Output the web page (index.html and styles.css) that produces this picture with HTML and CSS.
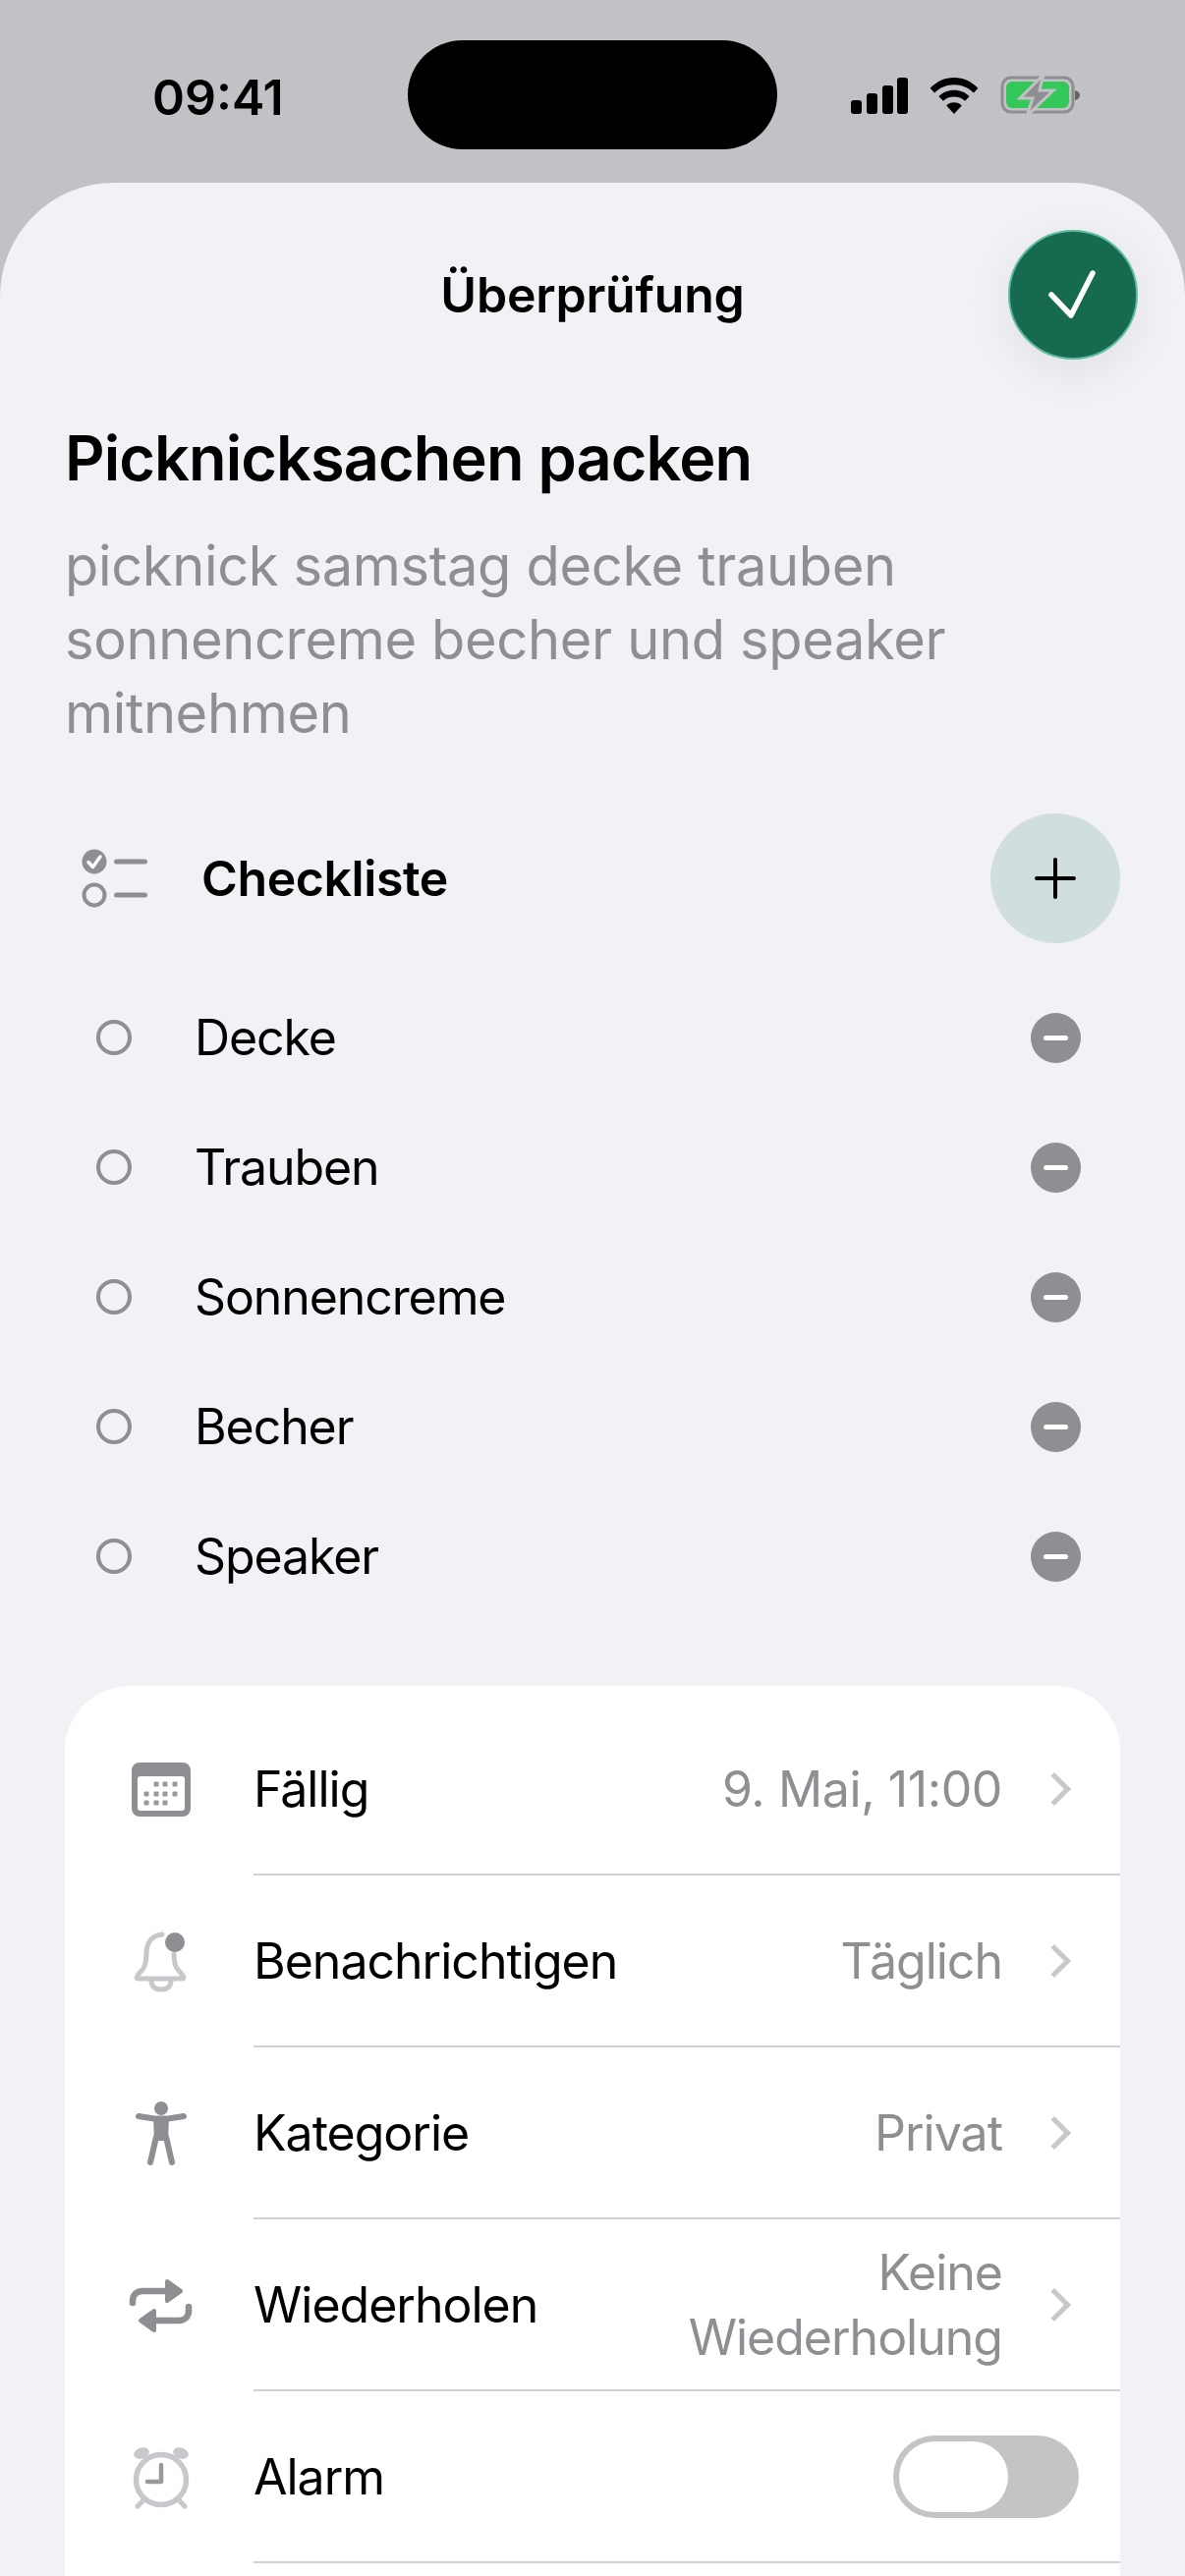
FILE: index.html
```html
<!DOCTYPE html>
<html lang="de">
<head>
    <meta charset="UTF-8">
    <meta name="viewport" content="width=device-width, initial-scale=1.0">
    <title>Überprüfung</title>
    <link rel="stylesheet" href="styles.css">
</head>
<body>
    <div class="phone">
        <div class="status-bar">
            <span class="time">09:41</span>
            <div class="island"></div>
            <div class="status-icons">
                <svg width="58" height="37" viewBox="0 0 58 37"><rect x="0" y="23" width="11" height="14" rx="3"/><rect x="16" y="16" width="11" height="21" rx="3"/><rect x="32" y="8" width="11" height="29" rx="3"/><rect x="47" y="0" width="11" height="37" rx="3"/></svg>
                <svg width="50" height="37" viewBox="0 0 50 38"><path d="M25 0C15 0 7 4 0 11l4.500 5C10 10.500 17 7.500 25 7.500S40 10.500 45.500 16l4.500-5C43 4 35 0 25 0z"/><path d="M25 13c-6.500 0-12 2.500-16 6.500l4.500 5c3-3 7-4.500 11.500-4.500s8.500 1.500 11.500 4.500l4.500-5C37 15.500 31.500 13 25 13z"/><path d="M25 26c-3.200 0-6 1.200-8 3.200L25 38l8-8.800C31 27.200 28.200 26 25 26z"/></svg>
                <svg width="82" height="42" viewBox="0 0 82 42"><rect x="2" y="3" width="72" height="35" rx="9" fill="none" stroke="#8e8e93" stroke-width="3"/><rect x="6" y="7" width="64" height="27" rx="6" fill="#34c759"/><path d="M76 16c3 .5 5 2.500 5 5s-2 4.500-5 5z" fill="#636366"/><path d="M44 0L20 24h13l-6 18 27-26H40z" fill="#8e8e93" stroke="#c2c1c6" stroke-width="3"/></svg>
            </div>
        </div>

        <div class="sheet">
            <div class="sheet-header">
                <h1>Überprüfung</h1>
                <button class="done-btn">
                    <svg width="60" height="60" viewBox="0 0 60 60"><path d="M8 30l20 21L50 8" fill="none" stroke="#fff" stroke-width="5.500" stroke-linecap="round" stroke-linejoin="round"/></svg>
                </button>
            </div>

            <h2 class="task-title">Picknicksachen packen</h2>
            <p class="task-note">picknick samstag decke trauben sonnencreme becher und speaker mitnehmen</p>

            <div class="check-head">
                <svg class="check-icon" width="68" height="60" viewBox="0 0 68 60">
                    <circle cx="13" cy="13" r="12.500" fill="#8e8e93"/>
                    <path d="M7 13.500l4.500 5L19 8" fill="none" stroke="#fff" stroke-width="3.500" stroke-linecap="round" stroke-linejoin="round"/>
                    <circle cx="13" cy="47" r="10.500" fill="none" stroke="#8e8e93" stroke-width="4"/>
                    <rect x="33" y="10.500" width="34" height="5" rx="2.500" fill="#8e8e93"/>
                    <rect x="33" y="44.500" width="34" height="5" rx="2.500" fill="#8e8e93"/>
                </svg>
                <span class="check-title">Checkliste</span>
                <button class="add-btn">
                    <svg width="42" height="42" viewBox="0 0 42 42"><path d="M21 2v38M2 21h38" stroke="#000" stroke-width="4" stroke-linecap="round"/></svg>
                </button>
            </div>

            <ul class="check-list">
                <li class="check-item"><span class="radio"></span><span class="check-name">Decke</span><span class="remove"></span></li>
                <li class="check-item"><span class="radio"></span><span class="check-name">Trauben</span><span class="remove"></span></li>
                <li class="check-item"><span class="radio"></span><span class="check-name">Sonnencreme</span><span class="remove"></span></li>
                <li class="check-item"><span class="radio"></span><span class="check-name">Becher</span><span class="remove"></span></li>
                <li class="check-item"><span class="radio"></span><span class="check-name">Speaker</span><span class="remove"></span></li>
            </ul>

            <div class="card">
                <div class="row">
                    <div class="row-icon">
                        <svg width="60" height="55" viewBox="0 0 60 55">
                            <rect width="60" height="55" rx="8" fill="#8e8e93"/>
                            <rect x="6" y="14" width="48" height="35" rx="3" fill="#fff"/>
                            <g fill="#98989d">
                                <rect x="22.500" y="19.500" width="5" height="5" rx="1"/><rect x="31.500" y="19.500" width="5" height="5" rx="1"/><rect x="41.500" y="19.500" width="5" height="5" rx="1"/>
                                <rect x="12.500" y="29.500" width="5" height="5" rx="1"/><rect x="22.500" y="29.500" width="5" height="5" rx="1"/><rect x="31.500" y="29.500" width="5" height="5" rx="1"/><rect x="41.500" y="29.500" width="5" height="5" rx="1"/>
                                <rect x="12.500" y="38.500" width="5" height="5" rx="1"/><rect x="22.500" y="38.500" width="5" height="5" rx="1"/><rect x="31.500" y="38.500" width="5" height="5" rx="1"/>
                            </g>
                        </svg>
                    </div>
                    <div class="row-body"><span class="row-label">Fällig</span><span class="row-value row-value-date">9. Mai, 11:00</span><span class="chevron"></span></div>
                </div>
                <div class="row">
                    <div class="row-icon">
                        <svg width="60" height="62" viewBox="0 0 60 62">
                            <path d="M31 3C20 4 15 12 15 23c0 9-2 14-5 17-3 3-5 5-5 7 0 1 1 1 3 1h42c2 0 3 0 3-1 0-2-2-4-5-7-3-3-5-8-5-17" fill="none" stroke="#c7c7cc" stroke-width="5" stroke-linecap="round" stroke-linejoin="round"/>
                            <path d="M20 50c0 6 4 9 10 9s10-3 10-9" fill="none" stroke="#c7c7cc" stroke-width="5"/>
                            <circle cx="44" cy="11" r="10" fill="#8e8e93"/>
                        </svg>
                    </div>
                    <div class="row-body"><span class="row-label">Benachrichtigen</span><span class="row-value">Täglich</span><span class="chevron"></span></div>
                </div>
                <div class="row">
                    <div class="row-icon">
                        <svg width="52" height="66" viewBox="0 0 52 66">
                            <circle cx="26" cy="7" r="7" fill="#8e8e93"/>
                            <path d="M3 15l16 2.500h14L49 15" fill="none" stroke="#8e8e93" stroke-width="6" stroke-linecap="round" stroke-linejoin="round"/>
                            <path d="M19 17h14l-1 22H20z" fill="#8e8e93" stroke="#8e8e93" stroke-width="2" stroke-linejoin="round"/>
                            <path d="M21 36l-6 26M31 36l6 26" fill="none" stroke="#8e8e93" stroke-width="6" stroke-linecap="round"/>
                        </svg>
                    </div>
                    <div class="row-body"><span class="row-label">Kategorie</span><span class="row-value">Privat</span><span class="chevron"></span></div>
                </div>
                <div class="row">
                    <div class="row-icon">
                        <svg width="66" height="56" viewBox="0 0 66 56">
                            <g fill="#8e8e93" stroke="#8e8e93" stroke-linejoin="round">
                                <path d="M4 25v-2c0-6 4-10 10-10h26" fill="none" stroke-width="6.500" stroke-linecap="round"/>
                                <path d="M39 3l14 10-14 10z" stroke-width="4"/>
                                <path d="M61 29v4c0 6-4 10-10 10H26" fill="none" stroke-width="6.500" stroke-linecap="round"/>
                                <path d="M26 33L12 43l14 10z" stroke-width="4"/>
                            </g>
                        </svg>
                    </div>
                    <div class="row-body"><span class="row-label">Wiederholen</span><span class="row-value row-value-wrap">Keine Wiederholung</span><span class="chevron"></span></div>
                </div>
                <div class="row">
                    <div class="row-icon">
                        <svg width="60" height="64" viewBox="0 0 60 64">
                            <circle cx="30" cy="34" r="25.500" fill="none" stroke="#c7c7cc" stroke-width="5.500"/>
                            <ellipse cx="10" cy="7" rx="8" ry="5.500" transform="rotate(-20 10 7)" fill="#c7c7cc"/>
                            <ellipse cx="50" cy="7" rx="8" ry="5.500" transform="rotate(20 50 7)" fill="#c7c7cc"/>
                            <path d="M6 61l6-6M54 61l-6-6" stroke="#c7c7cc" stroke-width="5" stroke-linecap="round"/>
                            <path d="M30 19v17H16" fill="none" stroke="#98989d" stroke-width="4.500" stroke-linecap="round" stroke-linejoin="round"/>
                        </svg>
                    </div>
                    <div class="row-body"><span class="row-label">Alarm</span><span class="toggle"><span class="knob"></span></span></div>
                </div>
            </div>
        </div>
    </div>
</body>
</html>
```

FILE: styles.css
```css
/* General Reset */
* {
    margin: 0;
    padding: 0;
    box-sizing: border-box;
}

body {
    font-family: Inter, "Liberation Sans", sans-serif;
    background-color: #c2c1c6;
    color: #000;
}

.phone {
    width: 1206px;
    height: 2622px;
    overflow: hidden;
}

/* Status bar */
.status-bar {
    height: 186px;
    display: flex;
    align-items: flex-start;
    position: relative;
}

.time {
    margin: 71px 0 0 155px;
    font-size: 50px;
    line-height: 56px;
    font-weight: 600;
}

.island {
    position: absolute;
    left: 415px;
    top: 41px;
    width: 376px;
    height: 111px;
    background-color: #000;
    border-radius: 56px;
}

.status-icons {
    display: flex;
    align-items: center;
    gap: 22px;
    margin: 76px 0 0 auto;
    padding-right: 106px;
}

/* Sheet */
.sheet {
    height: 2436px;
    padding: 0 66px;
    background-color: #f1f1f6;
    border-radius: 116px 116px 0 0;
}

.sheet-header {
    height: 201px;
    padding-top: 84px;
    position: relative;
    text-align: center;
}

.sheet-header h1 {
    font-size: 50px;
    line-height: 60px;
    font-weight: 600;
    letter-spacing: -0.2px;
}

.done-btn {
    position: absolute;
    right: -18px;
    top: 48px;
    width: 132px;
    height: 132px;
    display: flex;
    align-items: center;
    justify-content: center;
    border: 2px solid #5dbb9c;
    border-radius: 50%;
    background-color: #156a50;
    box-shadow: 0 10px 50px rgba(0, 0, 0, 0.08);
}

.task-title {
    margin-top: 43px;
    font-size: 63px;
    line-height: 72px;
    font-weight: 600;
    letter-spacing: -0.9px;
}

.task-note {
    margin-top: 37px;
    width: 1000px;
    font-size: 56px;
    line-height: 75px;
    letter-spacing: -0.35px;
    color: #8e8e93;
}

/* Checklist */
.check-head {
    display: flex;
    align-items: center;
    margin-top: 64px;
    height: 132px;
}

.check-icon {
    margin-left: 17px;
}

.check-title {
    margin-left: 54px;
    font-size: 50px;
    font-weight: 600;
    letter-spacing: -0.4px;
}

.add-btn {
    margin-left: auto;
    width: 132px;
    height: 132px;
    display: flex;
    align-items: center;
    justify-content: center;
    border: none;
    border-radius: 50%;
    background-color: #d0dede;
}

.check-list {
    list-style: none;
    margin-top: 30px;
}

.check-item {
    display: flex;
    align-items: center;
    height: 132px;
}

.radio {
    margin-left: 32px;
    width: 36px;
    height: 36px;
    border: 4px solid #8e8e93;
    border-radius: 50%;
}

.check-name {
    margin-left: 64px;
    font-size: 50px;
    letter-spacing: -1.1px;
}

.remove {
    margin-left: auto;
    margin-right: 40px;
    width: 51px;
    height: 51px;
    border-radius: 50%;
    background-color: #8e8e93;
    position: relative;
}

.remove::after {
    content: "";
    position: absolute;
    left: 13px;
    top: 23px;
    width: 25px;
    height: 5px;
    border-radius: 3px;
    background-color: #fff;
}

/* Settings card */
.card {
    margin-top: 66px;
    height: 1000px;
    padding-top: 18px;
    background-color: #fff;
    border-radius: 66px;
}

.row {
    display: flex;
    height: 175px;
}

.row-icon {
    width: 192px;
    padding-left: 4px;
    display: flex;
    align-items: center;
    justify-content: center;
    flex-shrink: 0;
}

.row-body {
    flex: 1;
    display: flex;
    align-items: center;
    padding-right: 40px;
    border-bottom: 2px solid #d1d1d6;
}

.row-label {
    font-size: 50px;
    letter-spacing: -1px;
}

.row-value {
    margin-left: auto;
    font-size: 50px;
    line-height: 66px;
    letter-spacing: -1px;
    color: #8e8e93;
    text-align: right;
}

.row-value-date {
    letter-spacing: -0.4px;
}

.row-value-wrap {
    width: 340px;
}

.chevron {
    margin: 0 15px 0 41px;
    width: 24px;
    height: 24px;
    border-top: 5px solid #c7c7cc;
    border-right: 5px solid #c7c7cc;
    transform: rotate(45deg);
}

.toggle {
    margin-left: auto;
    margin-right: 2px;
    width: 189px;
    height: 84px;
    padding: 6px;
    border-radius: 42px;
    background-color: #c4c4c6;
}

.knob {
    display: block;
    width: 111px;
    height: 72px;
    border-radius: 36px;
    background-color: #fff;
}
```
